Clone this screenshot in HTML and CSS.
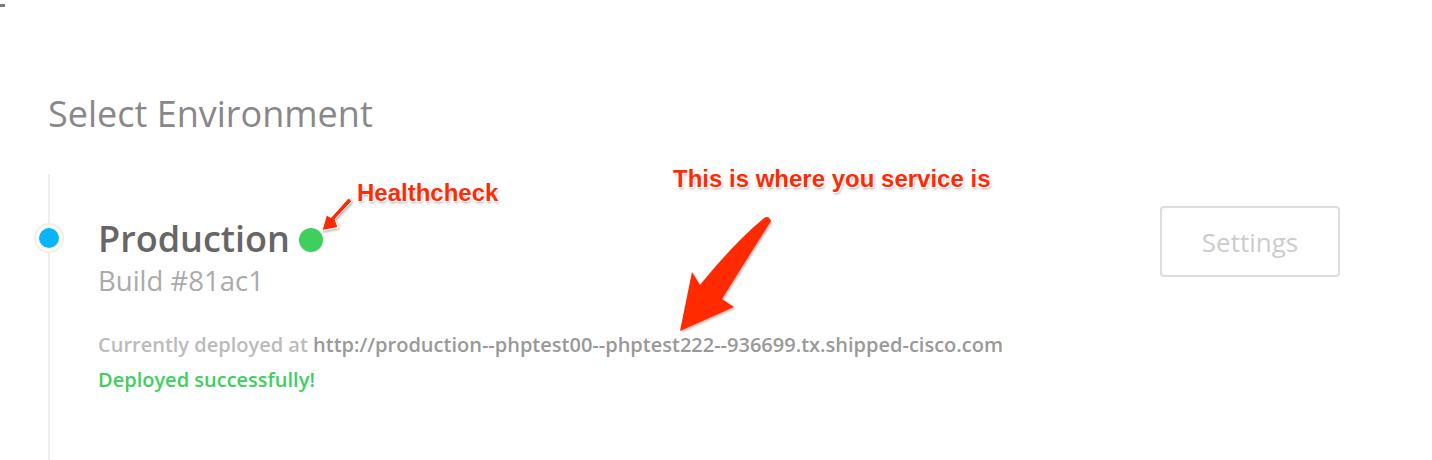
FILE: index.html
```html
<!DOCTYPE html>
<html lang="en">
<head>
<meta charset="utf-8">
<title>Select Environment</title>
<link rel="stylesheet" href="styles.css">
</head>
<body>
<div class="topmark"></div>
<main class="page">
  <h1 class="title">Select Environment</h1>
  <section class="timeline">
    <div class="env">
      <span class="env-marker"><span class="env-marker-dot"></span></span>
      <div class="env-row">
        <div class="env-info">
          <div class="env-name">Production <span class="health"></span></div>
          <div class="env-build">Build #81ac1</div>
        </div>
        <button class="settings-btn">Settings</button>
      </div>
      <p class="env-url"><span class="env-url-label">Currently deployed at</span> http://production--phptest00--phptest222--936699.tx.shipped-cisco.com</p>
      <p class="env-status">Deployed successfully!</p>
    </div>
  </section>
</main>
<div class="note note-health">Healthcheck</div>
<div class="note note-service">This is where you service is</div>
<svg class="arrows" width="1432" height="460" viewBox="0 0 1432 460">
  <defs>
    <filter id="sh" x="-20%" y="-20%" width="140%" height="140%">
      <feDropShadow dx="1" dy="1.5" stdDeviation="1.2" flood-color="#000" flood-opacity="0.3"/>
    </filter>
  </defs>
  <path filter="url(#sh)" fill="#ff2a06" stroke="#fff" stroke-width="1" d="M348 198.5 Q351.5 198 351.5 201.5 L335 219 L338 227.5 L322 230.5 L326.5 215 L331 217.5 Z"/>
  <path filter="url(#sh)" fill="#ff2a06" d="M763 219 Q768 214 771 221 Q745 262 722 299 L734 307 L680 331 L692 272 L700 285 Q735 242 763 219 Z"/>
</svg>
</body>
</html>
```

FILE: styles.css
```css
html, body {
  margin: 0;
  padding: 0;
  background: #fff;
}

body {
  font-family: "Open Sans", "Noto Sans", sans-serif;
  width: 1432px;
  height: 460px;
  overflow: hidden;
  position: relative;
}

.topmark {
  width: 5px;
  height: 3px;
  margin-top: 4px;
  background: #7a7a7a;
}

.page {
  padding: 0 92px 0 48px;
}

.title {
  margin: 85px 0 0 0;
  font-size: 36px;
  line-height: 44px;
  font-weight: 400;
  color: #888;
}

.timeline {
  margin-top: 38px;
  border-left: 2px solid #eee;
  padding: 32px 0 80px 48px;
}

.env {
  position: relative;
}

.env-marker {
  position: absolute;
  left: -64px;
  top: 17px;
  width: 26px;
  height: 26px;
  border: 2px solid #eee;
  border-radius: 50%;
  background: #fff;
  display: flex;
  align-items: center;
  justify-content: center;
}

.env-marker-dot {
  width: 20px;
  height: 20px;
  border-radius: 50%;
  background: #08b4fb;
}

.env-row {
  display: flex;
  justify-content: space-between;
  align-items: flex-start;
}

.env-info {
  padding-top: 12px;
}

.env-name {
  display: flex;
  align-items: center;
  font-size: 36px;
  line-height: 42px;
  font-weight: 600;
  color: #666;
}

.health {
  width: 24px;
  height: 24px;
  border-radius: 50%;
  background: #3ecf5e;
  margin-left: 9px;
  margin-top: 2px;
}

.env-build {
  margin-top: 5px;
  font-size: 27.5px;
  line-height: 32px;
  color: #aaa;
}

.settings-btn {
  width: 180px;
  height: 71px;
  border: 2px solid #ddd;
  border-radius: 4px;
  background: #fff;
  font-family: "Open Sans", "Noto Sans", sans-serif;
  font-size: 26px;
  color: #ccc;
  padding: 0;
}

.env-url {
  margin: 35px 0 0 0;
  font-size: 20px;
  line-height: 26px;
  font-weight: 600;
  color: #999;
}

.env-url-label {
  color: #bbb;
}

.env-status {
  margin: 9px 0 0 0;
  font-size: 20px;
  line-height: 26px;
  font-weight: 600;
  color: #3ecf5e;
}

.note {
  position: absolute;
  font-family: "Liberation Sans", Arial, sans-serif;
  font-weight: 700;
  font-size: 24px;
  line-height: 24px;
  color: #ff2a06;
  white-space: nowrap;
  text-shadow: 1px 0 0 #fff, -1px 0 0 #fff, 0 1px 0 #fff, 0 -1px 0 #fff,
    1px 1px 0 #fff, -1px -1px 0 #fff, 1px -1px 0 #fff, -1px 1px 0 #fff,
    1px 2px 3px rgba(0, 0, 0, 0.35);
}

.note-health {
  left: 357px;
  top: 181px;
}

.note-service {
  left: 673px;
  top: 167px;
}

.arrows {
  position: absolute;
  left: 0;
  top: 0;
  pointer-events: none;
}
```
